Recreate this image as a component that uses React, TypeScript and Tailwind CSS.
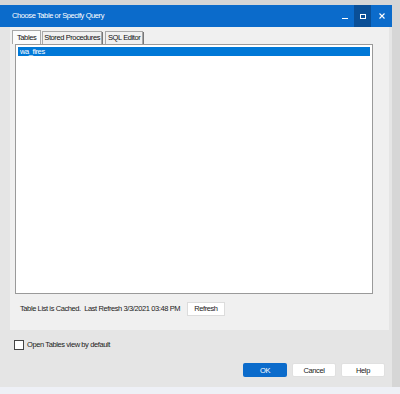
import React from "react";

export default function App() {
  const font = { fontFamily: '"Liberation Sans", Arial, sans-serif' };
  return (
    <div className="w-[400px] h-[394px] bg-[#d6d6d6] relative overflow-hidden tracking-[-0.4px]" style={font}>
      <div className="absolute left-0 top-[5px] w-[392px] h-[382px] flex flex-col bg-[#e5e5e5]">
        {/* Title bar */}
        <div className="h-[22px] bg-[#0b6bcb] flex items-center pl-[12px] text-white text-[7.5px]">
          <span className="flex-1">Choose Table or Specify Query</span>
          <div className="flex h-full items-stretch">
            <div className="w-[18px] flex items-end justify-center pb-[8px]">
              <div className="w-[6px] h-[1px] bg-white" />
            </div>
            <div className="w-[17px] bg-[#0a4f97] flex items-center justify-center">
              <div className="w-[6px] h-[5px] border border-white" />
            </div>
            <div className="w-[21px] flex items-center justify-center">
              <svg width="6" height="6" viewBox="0 0 6 6"><path d="M0.5 0.5 L5.5 5.5 M5.5 0.5 L0.5 5.5" stroke="white" strokeWidth="1.1" /></svg>
            </div>
          </div>
        </div>
        {/* Upper panel */}
        <div className="ml-[10px] mr-[3px] h-[303px] bg-[#f0f0f0] flex flex-col">
          <div className="flex items-end h-[17px] pl-[2px] gap-[1px] text-[7.5px] text-[#111]">
            <div className="h-[14px] px-[4px] bg-[#fbfbfb] border border-[#a8a8a8] border-b-0 flex items-center">Tables</div>
            <div className="h-[13px] px-[1px] bg-[#f0f0f0] border border-[#a8a8a8] border-b-0 flex items-center shadow-[1px_1px_0_#777]">Stored Procedures</div>
            <div className="ml-[2px] h-[13px] px-[2px] bg-[#f0f0f0] border border-[#a8a8a8] border-b-0 flex items-center shadow-[1px_1px_0_#777]">SQL Editor</div>
          </div>
          <div className="ml-[5px] w-[358px] h-[250px] bg-white border border-[#9a9a9a] p-[2px]">
            <div className="h-[9px] bg-[#0078d7] text-white text-[7.5px] leading-[9px] pl-[2px]">wa_fires</div>
          </div>
          <div className="flex items-center h-[20px] mt-[5px] pl-[10px] text-[7.5px] text-[#222]">
            <span>Table List is Cached.&nbsp; Last Refresh 3/3/2021 03:48 PM</span>
            <div className="ml-[7px] h-[14px] px-[6px] bg-white border border-[#dcdcdc] flex items-center">Refresh</div>
          </div>
        </div>
        {/* Lower */}
        <div className="flex items-center ml-[14px] mt-[9px] text-[7.5px] text-[#222]">
          <div className="w-[10px] h-[10px] bg-white border border-[#444]" />
          <span className="ml-[3px]">Open Tables view by default</span>
        </div>
        <div className="flex justify-end gap-[5px] mr-[7px] mt-[13px] text-[7.5px]">
          <div className="w-[44px] h-[14px] rounded-[2px] bg-[#0b6bcb] text-white flex items-center justify-center">OK</div>
          <div className="w-[44px] h-[14px] rounded-[2px] bg-white border border-[#e0e0e0] text-[#222] flex items-center justify-center">Cancel</div>
          <div className="w-[44px] h-[14px] rounded-[2px] bg-white border border-[#e0e0e0] text-[#222] flex items-center justify-center">Help</div>
        </div>
      </div>
      <div className="absolute left-0 top-[387px] w-[400px] h-[7px] bg-[#eef0f6]" />
    </div>
  );
}
